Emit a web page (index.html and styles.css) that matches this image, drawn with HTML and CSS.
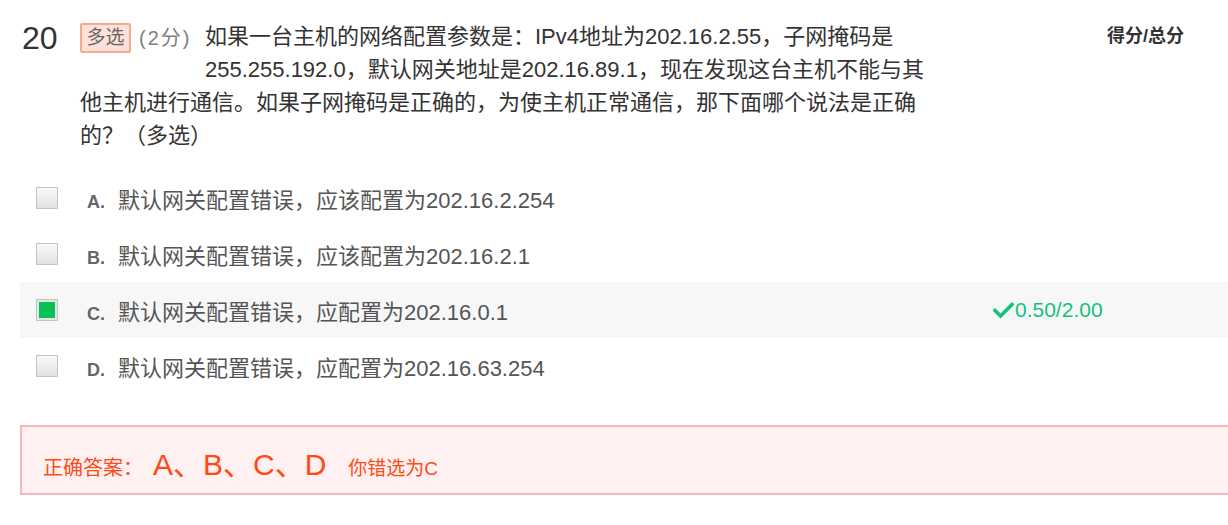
FILE: index.html
```html
<!DOCTYPE html>
<html lang="zh-CN">
<head>
<meta charset="utf-8">
<title>20 多选</title>
<link rel="stylesheet" href="styles.css">
</head>
<body>
<div class="page">
  <div class="title-row">
    <div class="qnum">20</div>
    <div class="qtext">
      <div class="qhead">
        <div class="qmeta"><span class="tag">多选</span><span class="points">(2分)</span></div>
        <div class="qfirst">如果一台主机的网络配置参数是：IPv4地址为202.16.2.55，子网掩码是255.255.192.0，默认网关地址是202.16.89.1，现在发现这台主机不能与其</div>
      </div>
      <div class="qrest">他主机进行通信。如果子网掩码是正确的，为使主机正常通信，那下面哪个说法是正确的？（多选）</div>
    </div>
    <div class="score-head">得分/总分</div>
  </div>

  <ul class="options">
    <li class="option">
      <span class="box"></span>
      <span class="label"><span class="letter">A.</span><span class="otext">默认网关配置错误，应该配置为202.16.2.254</span></span>
      <span class="oscore"></span>
    </li>
    <li class="option">
      <span class="box"></span>
      <span class="label"><span class="letter">B.</span><span class="otext">默认网关配置错误，应该配置为202.16.2.1</span></span>
      <span class="oscore"></span>
    </li>
    <li class="option selected">
      <span class="box checked"></span>
      <span class="label"><span class="letter">C.</span><span class="otext">默认网关配置错误，应配置为202.16.0.1</span></span>
      <span class="oscore"><svg class="tick" width="21" height="17" viewBox="0 0 21 17"><path d="M2 8.5 L7.5 14 L19 2.5" fill="none" stroke="currentColor" stroke-width="3.6" stroke-linecap="square"/></svg>0.50/2.00</span>
    </li>
    <li class="option">
      <span class="box"></span>
      <span class="label"><span class="letter">D.</span><span class="otext">默认网关配置错误，应配置为202.16.63.254</span></span>
      <span class="oscore"></span>
    </li>
  </ul>

  <div class="answer">
    <span class="ans-label">正确答案：</span><span class="ans-value">A、B、C、D</span><span class="ans-mine">你错选为C</span>
  </div>
</div>
</body>
</html>
```
FILE: styles.css
```css
html, body {
  margin: 0;
  padding: 0;
  background: #fff;
  overflow: hidden;
}
body {
  font-family: "Liberation Sans", "Noto Sans CJK SC", sans-serif;
  color: #333;
}
.page {
  padding: 20px 0 0 20px;
}
.title-row {
  display: flex;
  align-items: flex-start;
}
.qnum {
  width: 60px;
  flex: none;
  font-size: 32px;
  line-height: 36px;
  color: #333;
  padding-left: 2px;
  box-sizing: border-box;
}
.qtext {
  width: 846px;
  flex: none;
  font-size: 22px;
  line-height: 33px;
  color: #333;
}
.qhead {
  display: flex;
  align-items: flex-start;
}
.qmeta {
  width: 125px;
  flex: none;
  display: flex;
  align-items: flex-start;
  line-height: 28px;
}
.qfirst {
  flex: 1;
}
.tag {
  display: inline-block;
  box-sizing: border-box;
  width: 51px;
  height: 30px;
  margin-top: 3px;
  border: 2px solid #f9a98e;
  background: #fde2da;
  border-radius: 2px;
  color: #666;
  font-size: 19px;
  line-height: 26px;
  text-align: center;
}
.points {
  margin-left: 8px;
  margin-top: 4px;
  color: #808080;
  font-size: 20px;
  letter-spacing: 2px;
}
.score-head {
  margin-left: auto;
  margin-right: 44px;
  font-size: 18px;
  font-weight: bold;
  color: #333;
  line-height: 33px;
}
.options {
  list-style: none;
  margin: 18px 0 0 0;
  padding: 0;
}
.option {
  display: flex;
  align-items: center;
  height: 56px;
}
.option.selected {
  background: #f7f7f7;
}
.box {
  box-sizing: border-box;
  width: 22px;
  height: 22px;
  margin-left: 16px;
  border: 1px solid #c4c4c4;
  background: linear-gradient(#f8f8f8, #e2e2e2);
  flex: none;
}
.box.checked {
  background: #05c157;
  box-shadow: inset 0 0 0 2px #e6e6e6;
}
.label {
  flex: 1;
  display: flex;
  align-items: baseline;
  margin-left: 29px;
}
.letter {
  width: 31px;
  flex: none;
  font-size: 18px;
  font-weight: bold;
  color: #666;
}
.otext {
  font-size: 22px;
  color: #555;
}
.oscore {
  width: 235px;
  flex: none;
  display: flex;
  align-items: center;
  gap: 1px;
  font-size: 21px;
  color: #12c27a;
}
.tick {
  display: block;
}
.answer {
  box-sizing: border-box;
  height: 70px;
  margin-top: 31px;
  margin-right: -4px;
  padding: 10px 0 0 21px;
  border: 2px solid #f6b9b9;
  background: #fff1f1;
  color: #ff4a14;
  display: flex;
  align-items: baseline;
  line-height: 56px;
}
.ans-label {
  font-size: 20px;
}
.ans-value {
  font-size: 30px;
  margin-left: 10px;
}
.ans-mine {
  font-size: 19px;
  margin-left: 22px;
}
```
